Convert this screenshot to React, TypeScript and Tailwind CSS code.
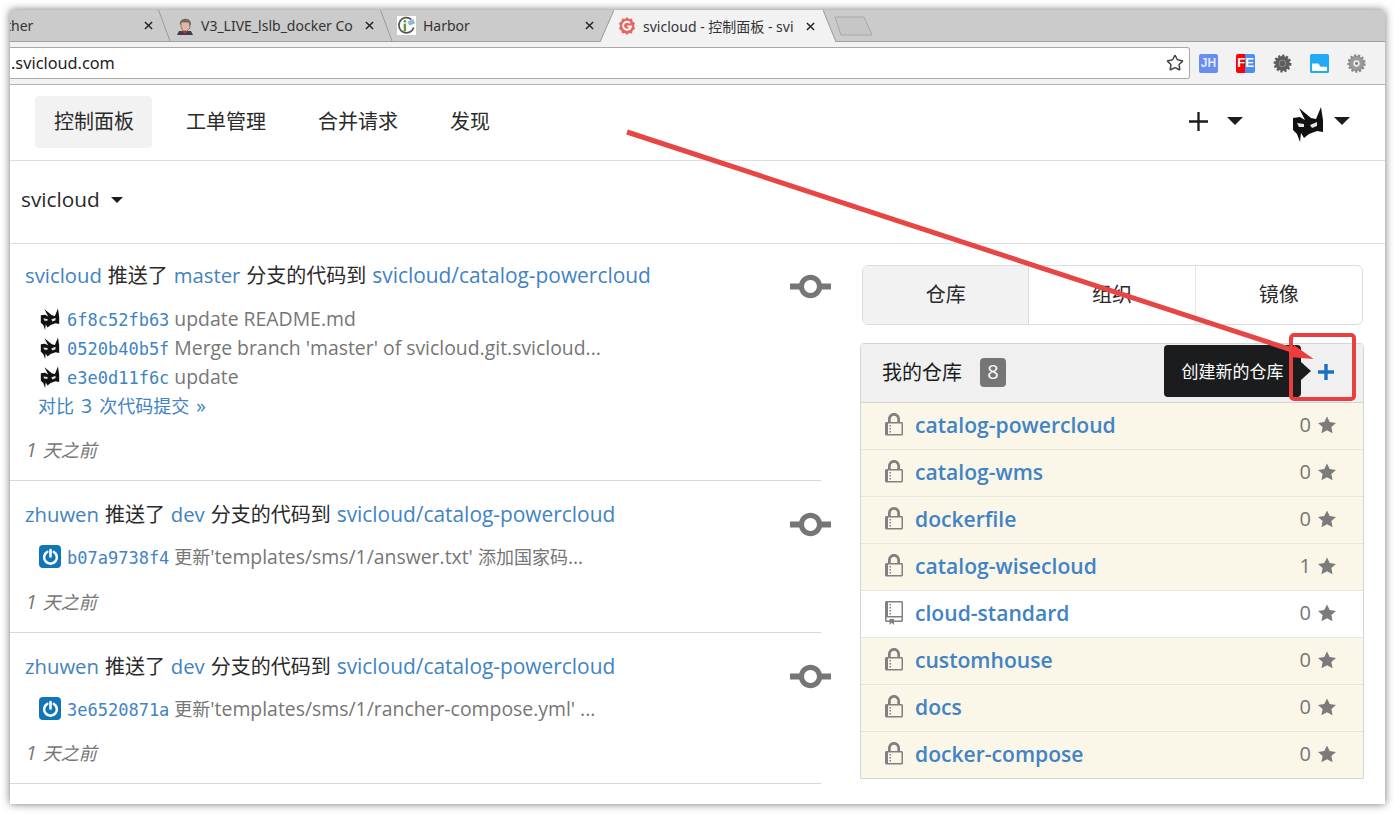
// App.tsx — Gogs dashboard inside a Chrome window, with a red annotation arrow
import { Star } from 'lucide-react';

const FONT = '"Open Sans", "Noto Sans CJK SC", sans-serif';

// the original renders Latin wider than the CJK font next to it
const Mixed = ({ text, latin }: { text: string; latin: string }) => (
  <>
    {text.split(/([\u4e00-\u9fff]+)/).map((part, i) =>
      i % 2 ? <span key={i}>{part}</span> : <span key={i} className={latin}>{part}</span>
    )}
  </>
);

const Mask = ({ className }: { className: string }) => (
  <svg viewBox="0 0 34 36" className={className}>
    <path
      fill="#111"
      d="M2 12 L9 11 L14 14 L8 2 L20 12 L25 13 L30 1 L32 14 L32 26 L26 25 L18 28 L13 32 L10 27 L9 36 L6 28 L2 24 Z"
    />
    <path fill="#e4e4e4" d="M6 17 L13 18 L13 21 L8 21 Z M19 19 L26 16 L26 20 L21 22 Z" />
  </svg>
);

const PowerIcon = ({ bg }: { bg: string }) => (
  <span className={`w-[23px] h-[23px] rounded-[4px] flex items-center justify-center ${bg}`}>
    <svg viewBox="0 0 16 16" className="w-[17px] h-[17px]" fill="none" stroke="white" strokeWidth="2.4" strokeLinecap="round">
      <path d="M5 3.6 A6 6 0 1 0 11 3.6" />
      <path d="M8 2 V8" />
    </svg>
  </span>
);

const CommitIcon = () => (
  <svg viewBox="0 0 14 16" className="w-[41px] h-[47px] shrink-0" fill="#767676">
    <path d="M10.86 7c-.45-1.72-2-3-3.86-3-1.86 0-3.41 1.28-3.86 3H0v2h3.14c.45 1.72 2 3 3.86 3 1.86 0 3.41-1.28 3.86-3H14V7h-3.14zM7 10.2c-1.22 0-2.2-.98-2.2-2.2 0-1.22.98-2.2 2.2-2.2 1.22 0 2.2.98 2.2 2.2 0 1.22-.98 2.2-2.2 2.2z" />
  </svg>
);

const LockIcon = () => (
  <svg viewBox="0 0 12 16" className="w-[18px] h-[24px]" fill="#808080">
    <path d="M4 13H3v-1h1v1zm8-6v7c0 .55-.45 1-1 1H1c-.55 0-1-.45-1-1V7c0-.55.45-1 1-1h1V4c0-2.2 1.8-4 4-4s4 1.8 4 4v2h1c.55 0 1 .45 1 1zM3.8 6h4.41V4c0-1.22-.98-2.2-2.2-2.2-1.22 0-2.2.98-2.2 2.2v2H3.8zM11 7H2v7h9V7zM4 8H3v1h1V8zm0 2H3v1h1v-1z" />
  </svg>
);

const BookIcon = () => (
  <svg viewBox="0 0 12 16" className="w-[18px] h-[24px]" fill="#808080">
    <path d="M4 9H3V8h1v1zm0-3H3v1h1V6zm0-2H3v1h1V4zm0-2H3v1h1V2zm8-1v12c0 .55-.45 1-1 1H6v2l-1.5-1.5L3 16v-2H1c-.55 0-1-.45-1-1V1c0-.55.45-1 1-1h10c.55 0 1 .45 1 1zm-1 10H1v2h2v-1h3v1h5v-2zm0-10H2v9h9V1z" />
  </svg>
);

const RepoStar = () => (
  <svg viewBox="0 0 14 16" className="w-[18px] h-[21px]" fill="#7b7b7b">
    <path d="M14 6l-4.9-.64L7 1 4.9 5.36 0 6l3.6 3.26L2.67 14 7 11.67 11.33 14l-.93-4.74L14 6z" />
  </svg>
);

const Caret = () => (
  <span className="block w-0 h-0 -mt-[3px] border-x-[8px] border-x-transparent border-t-[8px] border-t-[#1b1c1d]" />
);

const JenkinsFavicon = () => (
  <svg viewBox="0 0 18 18" className="w-[18px] h-[18px] shrink-0">
    <path fill="#7a685a" d="M4 8 C2 1 14 -1 15 6 L15 9 L12 5 L6 5 Z" />
    <path fill="#dcb9a2" stroke="#6a5a50" strokeWidth="0.7" d="M5 5 L13 5 L14 11 L11 14 L7 14 L5 10 Z" />
    <path fill="#3d3d4d" d="M1 18 L3 14 L15 14 L17 18 Z" />
    <path fill="#b8312f" d="M6 14 L12 14 L9 17 Z" />
  </svg>
);

const HarborFavicon = () => (
  <svg viewBox="0 0 20 20" className="w-[19px] h-[19px] shrink-0 bg-white">
    <path fill="none" stroke="#555" strokeWidth="1.8" d="M15 3.5 A8 8 0 1 0 17.6 12" />
    <rect x="7" y="8" width="2.6" height="8" fill="#5d9b3c" />
    <circle cx="8.3" cy="5.5" r="1.4" fill="#5d9b3c" />
    <path fill="#8fb8d8" d="M11 6 L17 3 L19 8 L13 10 Z" />
  </svg>
);

const GogsFavicon = () => (
  <svg viewBox="0 0 18 18" className="w-[18px] h-[18px] shrink-0">
    <path
      fill="#e5675f"
      d="M9 0 L11 2 L14 1.6 L14.6 4.4 L17 6 L16 9 L17 12 L14.6 13.6 L14 16.4 L11 16 L9 18 L7 16 L4 16.4 L3.4 13.6 L1 12 L2 9 L1 6 L3.4 4.4 L4 1.6 L7 2 Z"
    />
    <path fill="none" stroke="white" strokeWidth="1.9" d="M12 6 A4 4 0 1 0 13 9.5 L9.5 9.5" />
  </svg>
);

const Tab = ({ icon, label, className }: { icon?: React.ReactNode; label: string; className: string }) => (
  <div className={`relative flex items-center h-full ${className}`}>
    {icon}
    <span className="ml-[7px] text-[14px] text-[#333] whitespace-nowrap overflow-hidden" style={{ fontFamily: '"Noto Sans", "Noto Sans CJK SC", sans-serif' }}>
      {label}
    </span>
  </div>
);

const Close = () => (
  <svg viewBox="0 0 10 10" className="w-[9px] h-[9px] shrink-0" stroke="#222" strokeWidth="1.6">
    <path d="M1 1 L9 9 M9 1 L1 9" />
  </svg>
);

const Slant = () => (
  <svg viewBox="0 0 14 31" className="w-[14px] h-[31px] shrink-0" fill="none" stroke="#9a9a9a">
    <path d="M0.5 0 L12 31" />
  </svg>
);

const Browser = () => (
  <>
    {/* tabs */}
    <div className="h-[32px] bg-[#cbcbcb] border-b border-[#9f9f9f] flex items-start shrink-0">
      <div className="w-[148px] flex items-center overflow-hidden h-[31px] justify-between pr-[5px]">
        <span className="text-[14px] text-[#333] -ml-[4px]" style={{ fontFamily: '"Noto Sans", sans-serif' }}>ther</span>
        <Close />
      </div>
      <Slant />
      <div className="w-[208px] flex items-center h-[31px] justify-between pl-[4px] pr-[6px]">
        <Tab icon={<JenkinsFavicon />} label="V3_LIVE_lslb_docker Co" className="w-[180px] overflow-hidden" />
        <Close />
      </div>
      <Slant />
      <div className="w-[206px] flex items-center h-[31px] justify-between pl-[3px] pr-[6px]">
        <Tab icon={<HarborFavicon />} label="Harbor" className="" />
        <Close />
      </div>
      {/* active tab */}
      <svg viewBox="0 0 14 32" className="w-[14px] h-[32px] shrink-0">
        <path d="M0 32 L14 0 V32 Z" fill="#f2f2f2" />
        <path d="M0 32 L14 0" stroke="#9a9a9a" fill="none" />
      </svg>
      <div className="w-[209px] flex items-center h-[32px] justify-between pl-[4px] pr-[8px] bg-[#f2f2f2]">
        <Tab icon={<GogsFavicon />} label="svicloud - 控制面板 - svi" className="w-[176px] overflow-hidden" />
        <Close />
      </div>
      <svg viewBox="0 0 13 32" className="w-[13px] h-[32px] shrink-0">
        <path d="M0 0 L13 32 H0 Z" fill="#f2f2f2" />
        <path d="M0 0 L13 32" stroke="#9a9a9a" fill="none" />
      </svg>
      <svg viewBox="0 0 40 20" className="w-[40px] h-[20px] -ml-[2px] mt-[6px]" fill="#c6c6c6" stroke="#a8a8a8">
        <path d="M1 1 H30 L38 19 H7 Z" strokeLinejoin="round" />
      </svg>
    </div>
    {/* address bar */}
    <div className="h-[43px] bg-[#f2f2f2] border-b border-[#b4b4b4] flex items-center shrink-0">
      <div className="w-[1180px] h-[32px] bg-white border border-[#a9a9a9] border-l-0 rounded-r-[3px] flex items-center justify-between pr-[5px]">
        <span className="text-[16.3px] text-[#222] ml-[1px]" style={{ fontFamily: '"Noto Sans", sans-serif' }}>.svicloud.com</span>
        <Star className="w-[18px] h-[18px] text-[#444]" strokeWidth={2} />
      </div>
      <div className="flex items-center gap-[18px] ml-[9px]">
        <span className="w-[19px] h-[19px] rounded-[2px] bg-[#6a8ef0] text-[#dfe8ff] text-[12px] font-bold flex items-center justify-center" style={{ fontFamily: '"Liberation Sans", sans-serif' }}>JH</span>
        <span className="w-[19px] h-[19px] rounded-[2px] text-white text-[13px] font-bold flex items-center justify-center bg-[linear-gradient(90deg,#f00_0_50%,#4a90f0_50%_100%)]" style={{ fontFamily: '"Liberation Sans", sans-serif' }}>FE</span>
        <svg viewBox="0 0 18 18" className="w-[19px] h-[19px]">
          <circle cx="9" cy="9" r="7" fill="#5d5d5d" stroke="#5d5d5d" strokeWidth="3" strokeDasharray="2 1.6" />
          <circle cx="9" cy="9" r="3" fill="none" stroke="#888" />
        </svg>
        <svg viewBox="0 0 18 18" className="w-[19px] h-[19px]">
          <rect width="18" height="18" rx="1.5" fill="#22aaf5" />
          <path fill="white" d="M2 9 H8 L10 12 H16 V16 H2 Z" />
        </svg>
        <svg viewBox="0 0 18 18" className="w-[19px] h-[19px]">
          <circle cx="9" cy="9" r="7.4" fill="#9a9a9a" stroke="#8a8a8a" strokeWidth="2.6" strokeDasharray="2 1.6" />
          <circle cx="9" cy="9" r="3" fill="#eee" />
          <circle cx="9" cy="9" r="1.4" fill="#777" />
        </svg>
      </div>
    </div>
  </>
);

const NAV = ['控制面板', '工单管理', '合并请求', '发现'];

const TopNav = () => (
  <div className="h-[76px] border-b border-[#dedede] flex items-center shrink-0 pl-[25px] pr-[35px]">
    {NAV.map((n, i) => (
      <div key={n} className={`h-[52px] -mt-[1px] pl-[19px] pr-[18px] flex items-center whitespace-nowrap text-[20px] text-[#2a2a2a] rounded-[4px] mr-[15px] ${i === 0 ? 'bg-[#f2f2f2]' : ''}`}>
        {n}
      </div>
    ))}
    <div className="flex-1" />
    <svg viewBox="0 0 18 18" className="w-[19px] h-[19px] -mt-[3px]" stroke="#1b1c1d" strokeWidth="2.2">
      <path d="M9 0 V18 M0 9 H18" />
    </svg>
    <span className="ml-[19px] mr-[48px]"><Caret /></span>
    <Mask className="w-[34px] h-[36px] mr-[9px] mt-[2px]" />
    <Caret />
  </div>
);

type Commit = { av: React.ReactNode; sha: string; msg: string };
type FeedItem = { user: string; branch: string; commits: Commit[]; more?: string; h: string; timeMt: string; listMt: string };

const mask = <Mask className="w-[22px] h-[22px]" />;

const FEED: FeedItem[] = [
  {
    user: 'svicloud',
    branch: 'master',
    h: 'h-[237px]',
    listMt: 'mt-[14px]',
    timeMt: 'mt-[15px]',
    more: '对比 3 次代码提交 »',
    commits: [
      { av: mask, sha: '6f8c52fb63', msg: 'update README.md' },
      { av: mask, sha: '0520b40b5f', msg: "Merge branch 'master' of svicloud.git.svicloud..." },
      { av: mask, sha: 'e3e0d11f6c', msg: 'update' },
    ],
  },
  {
    user: 'zhuwen',
    branch: 'dev',
    h: 'h-[152px]',
    listMt: 'mt-[13px]',
    timeMt: 'mt-[14px]',
    commits: [{ av: <PowerIcon bg="bg-[#0f76b8]" />, sha: 'b07a9738f4', msg: "更新'templates/sms/1/answer.txt' 添加国家码..." }],
  },
  {
    user: 'zhuwen',
    branch: 'dev',
    h: 'h-[151px]',
    listMt: 'mt-[13px]',
    timeMt: 'mt-[13px]',
    commits: [{ av: <PowerIcon bg="bg-[#0f76b8]" />, sha: '3e6520871a', msg: "更新'templates/sms/1/rancher-compose.yml' ..." }],
  },
];

const Feed = () => (
  <div className="w-[811px] shrink-0">
    {FEED.map((f, i) => (
      <div key={i} className={`${f.h} border-b border-[#d8d8d8] pl-[15px] flex justify-between`}>
        <div className={i === 0 ? 'pt-[15px]' : 'pt-[17px]'}>
          <div className="text-[20px] leading-[32px] text-[#2a2a2a] whitespace-nowrap [word-spacing:0.75px]">
            <span className="text-[#4183c4] text-[20.3px]">{f.user}</span> 推送了 <span className="text-[#4183c4] text-[20.3px]">{f.branch}</span> 分支的代码到{' '}
            <span className="text-[#4183c4] text-[20.9px]">svicloud/catalog-powercloud</span>
          </div>
          <div className={`${f.listMt} pl-[14px]`}>
            {f.commits.map((c) => (
              <div key={c.sha} className="flex items-center h-[29px] text-[18px] text-[#767676] whitespace-nowrap">
                <span className="w-[22px] flex justify-start -mt-[4px] mr-[6px]">{c.av}</span>
                <span className="text-[#4183c4] text-[17px] mr-[5px]" style={{ fontFamily: '"DejaVu Sans Mono", monospace' }}>{c.sha}</span>
                <span className="-mt-[3px]"><Mixed text={c.msg} latin="text-[19.4px]" /></span>
              </div>
            ))}
            {f.more && (
              <div className="text-[18px] leading-[28px] text-[#4183c4] -mt-[1px] -ml-[1px] [word-spacing:2px]">
                <Mixed text={f.more} latin="text-[19.4px]" />
              </div>
            )}
          </div>
          <div className={`italic text-[18px] text-[#767676] ml-[1px] [word-spacing:1px] ${f.timeMt}`}>
            <Mixed text="1 天之前" latin="text-[19.4px]" />
          </div>
        </div>
        <div className={`${i === 0 ? 'pt-[19px]' : 'pt-[20px]'} -mr-[10px]`}><CommitIcon /></div>
      </div>
    ))}
  </div>
);

const REPOS = [
  { name: 'catalog-powercloud', stars: 0, priv: true },
  { name: 'catalog-wms', stars: 0, priv: true },
  { name: 'dockerfile', stars: 0, priv: true },
  { name: 'catalog-wisecloud', stars: 1, priv: true },
  { name: 'cloud-standard', stars: 0, priv: false },
  { name: 'customhouse', stars: 0, priv: true },
  { name: 'docs', stars: 0, priv: true },
  { name: 'docker-compose', stars: 0, priv: true },
];

const Sidebar = () => (
  <div className="w-[504px] ml-[39px] pt-[21px] shrink-0">
    <div className="ml-[2px] w-[501px] h-[60px] border border-[#dcdcdc] rounded-[6px] grid grid-cols-3 text-[20px] text-[#2a2a2a] overflow-hidden">
      <div className="bg-[#f2f2f2] flex items-center justify-center border-r border-[#dcdcdc]">仓库</div>
      <div className="flex items-center justify-center border-r border-[#e6e6e6]">组织</div>
      <div className="flex items-center justify-center">镜像</div>
    </div>
    <div className="mt-[18px] border border-[#d4d4d5] rounded-t-[4px]">
      <div className="h-[59px] bg-[#f0f0f0] border-b border-[#d4d4d5] flex items-center pl-[21px] pr-[29px] justify-between">
        <div className="flex items-center">
          <span className="text-[20px] text-[#1b1c1d]">我的仓库</span>
          <span className="ml-[18px] -mt-[2px] w-[26px] h-[29px] bg-[#767676] rounded-[4px] text-white text-[20px] flex items-center justify-center">8</span>
        </div>
        <svg viewBox="0 0 16 16" className="w-[16px] h-[16px] -mt-[2px]" stroke="#1e70bf" strokeWidth="3.4">
          <path d="M8 0 V16 M0 8 H16" />
        </svg>
      </div>
      {REPOS.map((r) => (
        <div key={r.name} className={`h-[47px] last:h-[46px] pb-[2px] flex items-center pl-[24px] pr-[27px] border-b last:border-b-0 border-[#e8e6da] ${r.priv ? 'bg-[#faf6e8]' : 'bg-white'}`}>
          {r.priv ? <LockIcon /> : <BookIcon />}
          <span className="ml-[12px] text-[21.1px] font-semibold text-[#4183c4] flex-1">{r.name}</span>
          <span className="text-[20px] text-[#767676] mr-[7px]">{r.stars}</span>
          <RepoStar />
        </div>
      ))}
    </div>
  </div>
);

export default function App() {
  return (
    <div className="w-[1394px] h-[814px] bg-white pt-[10px] pl-[10px] overflow-hidden" style={{ fontFamily: FONT }}>
      <div className="relative w-[1375px] h-[794px] bg-white overflow-hidden rounded-tr-[4px] shadow-[0_0_9px_rgba(0,0,0,0.55)] flex flex-col">
        <Browser />
        <TopNav />
        <div className="h-[83px] border-b border-[#dedede] flex items-center pl-[11px] pb-[4px] shrink-0">
          <span className="text-[20.8px] text-[#2a2a2a] mr-[11px]">svicloud</span>
          <span className="w-0 h-0 border-x-[6px] border-x-transparent border-t-[6px] border-t-[#1b1c1d]" />
        </div>
        <div className="flex">
          <Feed />
          <Sidebar />
        </div>

        {/* tooltip */}
        <div className="absolute left-[1154px] top-[335px] w-[137px] h-[52px] pt-[1px] bg-[#1b1c1d] rounded-[4px] flex items-center justify-center text-[17px] text-white">
          创建新的仓库
          <span className="absolute left-[137px] top-[17px] w-0 h-0 border-y-[9px] border-y-transparent border-l-[10px] border-l-[#1b1c1d]" />
        </div>

        {/* annotation */}
        <svg className="absolute left-0 top-0 w-[1375px] h-[794px] pointer-events-none" viewBox="0 0 1375 794">
          <rect x="1281" y="325" width="63" height="64" rx="3" fill="none" stroke="#ea3f3f" strokeWidth="4" />
          <path d="M617 122 L1285 341" stroke="#e84545" strokeWidth="5" fill="none" />
          <path d="M1303.5 349 L1284 335 L1279 347 Z" fill="#ee3b3b" />
        </svg>
      </div>
    </div>
  );
}
